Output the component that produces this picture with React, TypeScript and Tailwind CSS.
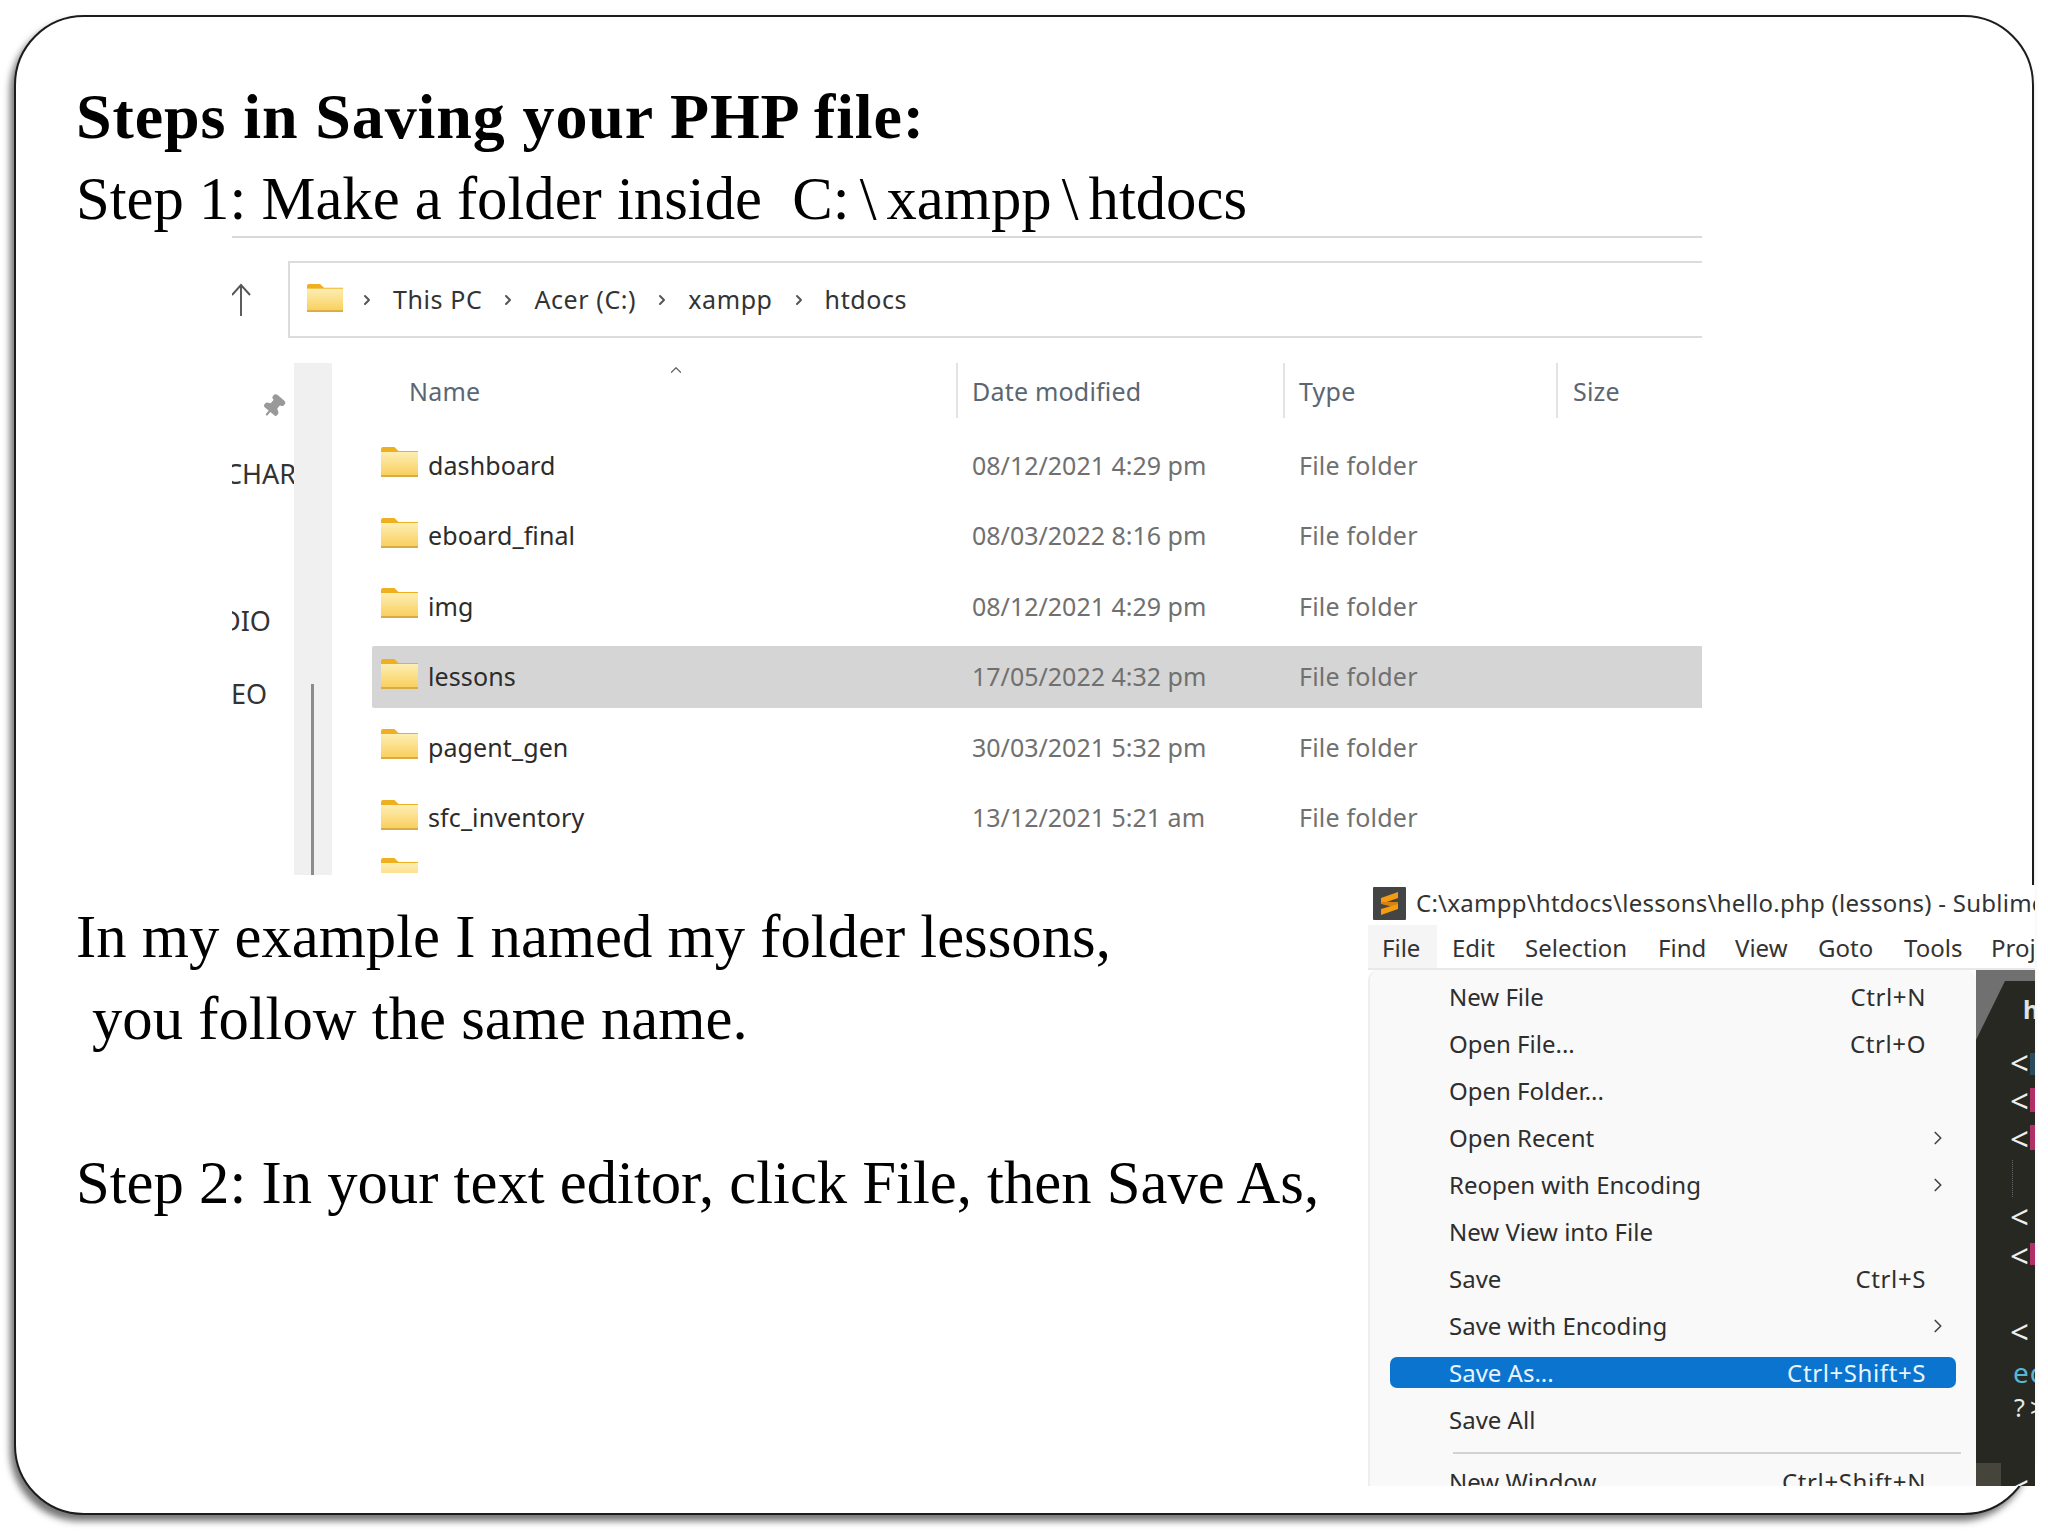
import { ChevronRight, ChevronUp, Pin } from "lucide-react";

const serif = "font-['Liberation_Serif',serif]";
const ui = "font-['Noto_Sans',sans-serif]";

const rows = [
  { name: "dashboard", date: "08/12/2021 4:29 pm" },
  { name: "eboard_final", date: "08/03/2022 8:16 pm" },
  { name: "img", date: "08/12/2021 4:29 pm" },
  { name: "lessons", date: "17/05/2022 4:32 pm", selected: true },
  { name: "pagent_gen", date: "30/03/2021 5:32 pm" },
  { name: "sfc_inventory", date: "13/12/2021 5:21 am" },
];

const crumbs = ["This PC", "Acer (C:)", "xampp", "htdocs"];

const menu = [
  { label: "New File", keys: "Ctrl+N" },
  { label: "Open File...", keys: "Ctrl+O" },
  { label: "Open Folder..." },
  { label: "Open Recent", more: true },
  { label: "Reopen with Encoding", more: true },
  { label: "New View into File" },
  { label: "Save", keys: "Ctrl+S" },
  { label: "Save with Encoding", more: true },
  { label: "Save As...", keys: "Ctrl+Shift+S", active: true },
  { label: "Save All" },
];

const menubar = [
  { label: "File", width: "w-[69px]" },
  { label: "Edit", width: "w-[73px]" },
  { label: "Selection", width: "w-[133px]" },
  { label: "Find", width: "w-[77px]" },
  { label: "View", width: "w-[83px]" },
  { label: "Goto", width: "w-[86px]" },
  { label: "Tools", width: "w-[87px]" },
  { label: "Proj", width: "w-[60px]" },
];

function FolderIcon({ className }: { className?: string }) {
  return (
    <svg viewBox="0 0 36 30" preserveAspectRatio="none" className={className}>
      <defs>
        <linearGradient id="folderBody" x1="0" y1="0" x2="0" y2="1">
          <stop offset="0" stopColor="#fdeeb4" />
          <stop offset="1" stopColor="#f9cf5c" />
        </linearGradient>
      </defs>
      <path d="M0 2 Q0 0 2 0 H13 L17 4 H36 V12 H0 Z" fill="#efb01f" />
      <rect x="0" y="5" width="36" height="24" fill="url(#folderBody)" />
      <rect x="0" y="28" width="36" height="2" fill="#d8ac45" />
    </svg>
  );
}

function Explorer() {
  return (
    <div className={`ml-[216px] w-[1470px] h-[639px] flex flex-col overflow-hidden ${ui}`}>
      <div className="h-[2px] bg-[#d9d9d9]" />
      <div className="flex h-[100px] items-start pt-[23px]">
        <div className="w-[56px] h-[77px] flex items-center">
          <svg viewBox="0 0 26 34" className="w-[26px] h-[34px] -ml-[4px]" fill="none" stroke="#555" strokeWidth="1.9">
            <path d="M13 3 V33 M4 12 L13 2 L22 12" />
          </svg>
        </div>
        <div className="flex-1 h-[77px] flex items-center border-2 border-r-0 border-[#dcdcdc] pl-[17px] text-[25px] text-[#333]">
          <FolderIcon className="w-[36px] h-[28px] -mt-[3px] mr-[16px]" />
          {crumbs.map((c) => (
            <div key={c} className="flex items-center">
              <ChevronRight className="w-[16px] h-[16px] text-[#555] mr-[18px]" strokeWidth={3} />
              <span className="mr-[18px] tracking-[0.6px]">{c}</span>
            </div>
          ))}
        </div>
      </div>
      <div className="flex flex-1 mt-[25px] min-h-0">
        <div className="relative w-[62px] text-[27px] text-[#333] overflow-hidden">
          <Pin className="absolute left-[29px] top-[31px] w-[25px] h-[25px] text-[#999] fill-[#999] rotate-[40deg]" />
          <span className="absolute -left-[7px] top-[91px] whitespace-nowrap">CHAR</span>
          <span className="absolute -left-[11px] top-[238px] whitespace-nowrap">DIO</span>
          <span className="absolute -left-[1px] top-[311px] whitespace-nowrap">EO</span>
        </div>
        <div className="relative w-[38px] bg-[#f0f0f0]">
          <div className="absolute left-[17px] bottom-0 w-[3px] h-[191px] bg-[#8c8c8c]" />
        </div>
        <div className="w-[40px]" />
        <div className="flex-1 min-w-0 flex flex-col">
          <div className="flex h-[62px] items-start text-[25px] text-[#5b6672] tracking-[0.2px]">
            <div className="relative w-[584px] h-[55px] pl-[37px] pt-[2px] flex items-center">
              Name
              <ChevronUp className="absolute left-[292px] -top-[2px] w-[24px] h-[18px] text-[#666]" strokeWidth={1.6} />
            </div>
            <div className="w-[327px] h-[55px] pl-[14px] pt-[2px] flex items-center border-l-2 border-[#e3e3e3]">Date modified</div>
            <div className="w-[273px] h-[55px] pl-[14px] pt-[2px] flex items-center border-l-2 border-[#e3e3e3]">Type</div>
            <div className="h-[55px] pl-[15px] pt-[2px] flex items-center border-l-2 border-[#e3e3e3]">Size</div>
          </div>
          <div className="flex flex-col pt-[5px]">
            {rows.map((r) => (
              <div key={r.name} className="flex h-[70.5px] items-center text-[25px]">
                <div className={`flex w-full h-[62px] items-center ${r.selected ? "bg-[#d5d5d5] rounded-l-[2px]" : ""}`}>
                  <FolderIcon className="w-[37px] h-[30px] ml-[9px] -mt-[6px]" />
                  <div className="w-[539px] pl-[10px] text-[#2c2c2c] tracking-[0.1px]">{r.name}</div>
                  <div className="w-[327px] text-[#707070] -ml-[1px] pl-[16px]">{r.date}</div>
                  <div className="pl-[16px] text-[#707070] tracking-[0.2px]">File folder</div>
                </div>
              </div>
            ))}
            <div className="h-[20px] overflow-hidden">
              <FolderIcon className="w-[37px] h-[30px] ml-[9px] mt-[5px]" />
            </div>
          </div>
        </div>
      </div>
    </div>
  );
}

function CodePane() {
  const marks = [
    "top-[74px]",
    "top-[112px]",
    "top-[150px]",
    "top-[228px]",
    "top-[267px]",
    "top-[343px]",
    "top-[499px]",
  ];
  return (
    <div className="relative w-[59px] bg-[#272822] overflow-hidden">
      <svg viewBox="0 0 59 70" className="absolute left-0 top-0 w-[59px] h-[70px]">
        <polygon points="0,0 59,0 59,11 29,11 0,70" fill="#707070" />
      </svg>
      <div className="absolute left-0 bottom-0 w-[25px] h-[23px] bg-[#45453c]" />
      <span className="absolute left-[47px] top-[22px] text-[25px] leading-[34px] font-bold text-[#d8e4e6]">h</span>
      {marks.map((m) => (
        <span key={m} className={`absolute left-[34px] text-[33px] leading-[38px] text-[#eeeeee] ${m}`}>
          &lt;
        </span>
      ))}
      <div className="absolute left-[54px] top-[83px] w-[5px] h-[22px] bg-[#2b4a5a]" />
      <div className="absolute left-[54px] top-[118px] w-[5px] h-[24px] bg-[#b03068]" />
      <div className="absolute left-[54px] top-[155px] w-[5px] h-[25px] bg-[#b03068]" />
      <div className="absolute left-[54px] top-[273px] w-[5px] h-[22px] bg-[#b03068]" />
      <div className="absolute left-[36px] top-[190px] h-[37px] border-l border-dotted border-[#666]" />
      <span className="absolute left-[37px] top-[385px] text-[28px] leading-[34px] text-[#55b8d2] tracking-[1px]">ec</span>
      <span className="absolute left-[38px] top-[420px] text-[25px] leading-[34px] text-[#e8e8e8]">?</span>
      <span className="absolute left-[54px] top-[420px] text-[25px] leading-[34px] text-[#e8e8e8]">&gt;</span>
    </div>
  );
}

function Editor() {
  return (
    <div className={`w-[667px] h-[601px] bg-white overflow-hidden flex flex-col relative ${ui}`}>
      <div className="flex h-[36px] items-center pl-[5px]">
        <svg viewBox="0 0 33 33" className="w-[33px] h-[33px] shrink-0">
          <rect width="33" height="33" rx="1" fill="#444" />
          <polygon points="8,11 25,5 25,11 8,17" fill="#f39c12" />
          <polygon points="8,15 25,15 25,21 8,17" fill="#d9820c" />
          <polygon points="8,22 25,17 25,22 8,28" fill="#f39c12" />
        </svg>
        <span className="ml-[10px] text-[24px] text-[#333] whitespace-nowrap tracking-[0.25px]">
          C:\xampp\htdocs\lessons\hello.php (lessons) - Sublime Text
        </span>
      </div>
      <div className="flex h-[43px] mt-[4px] items-center text-[24px] text-[#333]">
        {menubar.map((m, i) => (
          <div
            key={m.label}
            className={`${m.width} shrink-0 h-full flex items-center pt-[3px] ${i === 0 ? "bg-[#f5f5f5] pl-[14px]" : "pl-[15px]"}`}
          >
            {m.label}
          </div>
        ))}
      </div>
      <div className="flex flex-1 min-h-0 border-t-2 border-[#e8e8e8]">
        <div className="w-[608px] bg-[#f9f9f9] border-l-2 border-[#eeeeee] rounded-t-[10px] overflow-hidden">
          <div className="pt-[3px]">
            {menu.map((m) => (
              <div key={m.label} className="flex h-[47px] items-center">
                <div
                  className={`flex w-[566px] ml-[20px] h-[31px] items-center justify-between rounded-[7px] pl-[59px] pr-[30px] text-[24px] ${
                    m.active ? "bg-[#0a74cf] text-[#e8f4ff]" : "text-[#2e2e2e]"
                  }`}
                >
                  <span>{m.label}</span>
                  {m.keys && <span className="tracking-[0.6px]">{m.keys}</span>}
                  {m.more && <ChevronRight className="w-[22px] h-[24px] -mr-[23px] text-[#444]" strokeWidth={1.8} />}
                </div>
              </div>
            ))}
          </div>
          <div className="ml-[83px] mr-[15px] mt-[9px] h-[2px] bg-[#d2d2d2]" />
          <div className="flex h-[40px] mt-[8px] items-center justify-between pl-[79px] pr-[50px] text-[24px] text-[#2e2e2e]">
            <span>New Window</span>
            <span className="tracking-[0.6px]">Ctrl+Shift+N</span>
          </div>
        </div>
        <CodePane />
      </div>
    </div>
  );
}

export default function App() {
  return (
    <div className="w-[2048px] h-[1536px] bg-white pt-[15px] pl-[14px] overflow-hidden">
      <div className="w-[2020px] h-[1500px] rounded-[70px] border-2 border-[#1c1c1c] shadow-[-4px_6px_7px_rgba(0,0,0,0.55)] bg-white">
        <div className={`pl-[60px] pt-[59px] text-black leading-[82px] ${serif}`}>
          <h1 className="h-[82px] font-bold text-[64px] tracking-[0.9px]">Steps in Saving your PHP file:</h1>
          <p className="h-[78px] whitespace-pre text-[60.7px]">
            Step 1: Make a folder inside{"  "}C:<span className="mx-[10px]">\</span>xampp<span className="mx-[10px]">\</span>htdocs
          </p>
        </div>
        <Explorer />
        <div className={`flex justify-between text-[60.7px] leading-[82px] text-black ${serif}`}>
          <div className="pl-[60px] pt-[21px] whitespace-nowrap">
            <p>In my example I named my folder lessons,</p>
            <p className="pl-[16px]">you follow the same name.</p>
            <p className="mt-[82px]">Step 2: In your text editor, click File, then Save As,</p>
          </div>
          <div className="mt-[10px] -mr-[3px]">
            <Editor />
          </div>
        </div>
      </div>
    </div>
  );
}
